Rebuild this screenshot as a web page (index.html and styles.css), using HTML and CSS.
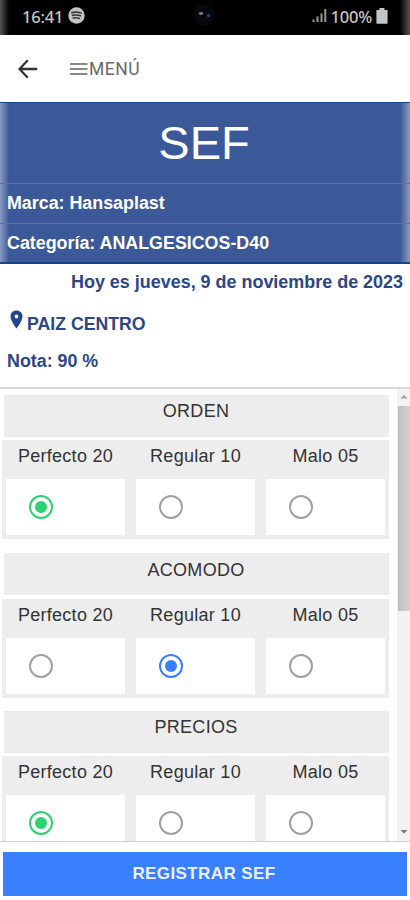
FILE: index.html
```html
<!DOCTYPE html>
<html lang="es">
<head>
<meta charset="utf-8">
<title>SEF</title>
<link rel="stylesheet" href="styles.css">
</head>
<body>
<div class="status">
  <span class="time">16:41</span>
  <svg class="spot" width="17" height="17" viewBox="0 0 17 17"><circle cx="8.5" cy="8.5" r="8.2" fill="#c4c4c4"/><path d="M3.8 5.600Q8.500 4.500 13.200 6M4.400 8.400Q8.500 7.400 12.600 8.800M5.200 11Q8.500 10.300 11.500 11.500" fill="none" stroke="#3a3a3a" stroke-width="1.600" stroke-linecap="round"/></svg>
  <span class="camera"><svg width="22" height="22" viewBox="0 0 22 22"><circle cx="11" cy="11" r="10.5" fill="#07080b"/><ellipse cx="8" cy="9.500" rx="2.400" ry="1.400" fill="#6d7a9a"/><circle cx="15.500" cy="11.500" r="1.800" fill="#17378c"/></svg></span>
  <svg class="signal" width="15" height="15" viewBox="0 0 15 15"><path d="M1.500 11.500V14M5.500 8.500V14M9.500 5.500V14M13.300 1V14" stroke="#999" stroke-width="2"/></svg>
  <span class="pct">100%</span>
  <svg class="battery" width="12" height="16" viewBox="0 0 12 16"><path d="M3.500 0h5v2H11q.6 0 .6.6V15q0 .7-.7.7H1.100q-.7 0-.7-.7V2.600q0-.6.6-.6h2.500z" fill="#c4c4c4"/></svg>
</div>
<div class="toolbar">
  <svg class="back" width="20" height="20" viewBox="0 0 20 20"><path d="M19.200 10H2M9.800 1.200L1.500 10L9.800 18.800" fill="none" stroke="#333" stroke-width="2.300"/></svg>
  <svg class="burger" width="18" height="14" viewBox="0 0 18 14"><path d="M0 2H17.500M0 7H17.500M0 12H17.500" stroke="#606060" stroke-width="1.700"/></svg>
  <span class="menu">MENÚ</span>
</div>
<header class="hero">
  <h1>SEF</h1>
  <p>Marca: Hansaplast</p>
  <p>Categoría: ANALGESICOS-D40</p>
</header>
<section class="info">
  <div class="date">Hoy es jueves, 9 de noviembre de 2023</div>
  <div class="place"><svg width="14" height="19" viewBox="0 0 14 19"><path fill-rule="evenodd" d="M6.500 .5C2.900.5.500 3 .500 6.500C.500 11 6.500 18.500 6.500 18.500S12.500 11 12.500 6.500C12.500 3 10.100.5 6.500 .5zM6.500 4.600a1.900 1.900 0 1 1 0 3.800a1.900 1.900 0 0 1 0-3.800z" fill="#23468c"/></svg><span>PAIZ CENTRO</span></div>
  <div class="score">Nota: 90 %</div>
</section>
<main class="scroller">
  <div class="list">
    <section class="group">
      <h2>ORDEN</h2>
      <div class="options">
        <label>Perfecto 20<span class="cell"><i class="radio green"></i></span></label>
        <label>Regular 10<span class="cell"><i class="radio"></i></span></label>
        <label>Malo 05<span class="cell"><i class="radio"></i></span></label>
      </div>
    </section>
    <section class="group middle">
      <h2>ACOMODO</h2>
      <div class="options">
        <label>Perfecto 20<span class="cell"><i class="radio"></i></span></label>
        <label>Regular 10<span class="cell"><i class="radio blue"></i></span></label>
        <label>Malo 05<span class="cell"><i class="radio"></i></span></label>
      </div>
    </section>
    <section class="group">
      <h2>PRECIOS</h2>
      <div class="options">
        <label>Perfecto 20<span class="cell"><i class="radio green"></i></span></label>
        <label>Regular 10<span class="cell"><i class="radio"></i></span></label>
        <label>Malo 05<span class="cell"><i class="radio"></i></span></label>
      </div>
    </section>
  </div>
  <div class="bar">
    <svg width="12" height="17" viewBox="0 0 12 17"><path d="M3.500 9.500L7 6l3.500 3.500z" fill="#a0a0a0"/></svg>
    <div class="thumb"></div>
    <svg class="down" width="12" height="17" viewBox="0 0 12 17"><path d="M3.500 6L7 9.500L10.500 6z" fill="#777"/></svg>
  </div>
</main>
<footer class="footer"><button>REGISTRAR SEF</button></footer>
</body>
</html>
```
FILE: styles.css
```css
* { box-sizing: border-box; }
body {
  margin: 0;
  width: 410px;
  height: 900px;
  overflow: hidden;
  display: flex;
  flex-direction: column;
  background: #fff;
  font-family: "Liberation Sans", Arial, sans-serif;
  font-size: 18px;
  color: #333;
}
h1, h2, p { margin: 0; font-weight: normal; }
svg { display: block; flex: none; }

.status {
  flex: none;
  height: 35px;
  display: flex;
  align-items: center;
  padding: 0 22px;
  background: linear-gradient(90deg, #555 0, #000 9px, #000 400px, #555 410px);
  color: #c4c4c4;
  font-family: "Noto Sans", sans-serif;
  font-weight: 500;
  font-size: 16.5px;
  letter-spacing: -0.2px;
}
.time { width: 46px; margin-top: -3px; }
.spot { margin-top: -5px; }
.camera { margin-left: 108px; margin-top: -5px; }
.signal { margin-left: 97px; margin-top: -4px; }
.pct { margin-left: 4px; width: 46px; margin-top: -3px; }
.battery { margin-top: -4px; }

.toolbar {
  flex: none;
  height: 67px;
  display: flex;
  align-items: center;
  padding-left: 18px;
  font-family: Roboto, sans-serif;
  color: #686868;
}
.burger { margin-left: 32px; }
.menu { margin-left: 1px; font-size: 17.500px; letter-spacing: 0.5px; }

.hero {
  flex: none;
  height: 162px;
  background: linear-gradient(90deg, #8b9bc5 0, #3b5998 9px, #3b5998 400px, #8b9bc5 410px);
  border-top: 1px solid #174487;
  border-bottom: 2px solid #174487;
  color: #fff;
}
.hero h1 {
  height: 80px;
  line-height: 79px;
  text-align: center;
  font-size: 47px;
  text-indent: -2px;
}
.hero p {
  height: 40px;
  line-height: 38px;
  padding-left: 7px;
  border-top: 1px solid #5873a9;
  font-weight: bold;
  font-size: 17.850px;
}
.hero p + p { height: 39px; }

.info {
  flex: none;
  height: 123px;
  color: #2c4687;
  font-weight: bold;
  font-size: 17.850px;
}
.date { height: 36px; line-height: 36px; text-align: right; padding-right: 7px; font-size: 17.950px; }
.place { height: 42px; display: flex; align-items: center; padding-left: 10px; }
.place svg { margin-top: -3px; }
.place span { margin-left: 3px; font-size: 17.700px; margin-top: 6px; }
.score { line-height: 39px; padding-left: 7px; }

.scroller {
  flex: none;
  height: 455px;
  overflow: hidden;
  display: flex;
  justify-content: space-between;
  border-top: 2px solid #d8d8d8;
  border-bottom: 1px solid #d0d0d0;
}
.list { width: 390px; padding-top: 6px; }
.group { margin-bottom: 14px; }
.group h2 {
  height: 42px;
  margin-left: 4px;
  margin-right: 1px;
  padding-right: 1px;
  background: #ededed;
  text-align: center;
  font-size: 18px;
  letter-spacing: 0.3px;
  line-height: 32px;
}
.options {
  display: grid;
  grid-template-columns: repeat(3, 119px);
  column-gap: 11px;
  height: 99px;
  margin: 3px 1px 0 2px;
  padding-left: 4px;
  background: #ededed;
}
.middle { margin-bottom: 13px; }
.middle h2 { line-height: 34px; }
.middle .options { margin-top: 4px; }
.options label { text-align: center; line-height: 32px; letter-spacing: 0.28px; }
.cell { display: flex; align-items: center; height: 56px; margin-top: 7px; padding-left: 23px; background: #fff; }
.radio { width: 24px; height: 24px; border: 2px solid #a0a0a0; border-radius: 50%; display: grid; place-items: center; }
.green { border-color: #2dd36f; }
.blue { border-color: #3880ff; }
.green::after, .blue::after { content: ""; width: 12px; height: 12px; border-radius: 50%; }
.green::after { background: #2dd36f; }
.blue::after { background: #3880ff; }

.bar { width: 13px; display: flex; flex-direction: column; background: #f2f2f2; }
.thumb { height: 205px; margin-left: 1px; background: linear-gradient(90deg, #c0c0c0, #d2d2d2); }
.down { margin-top: auto; }

.footer { flex: none; height: 58px; padding: 10px 3px 4px; }
.footer button {
  display: block;
  width: 404px;
  height: 44px;
  padding: 0 2px 0 0;
  border: 0;
  background: #3880ff;
  color: #eaf1ff;
  font: bold 17px "Liberation Sans", Arial, sans-serif;
  letter-spacing: 0.4px;
}
```
